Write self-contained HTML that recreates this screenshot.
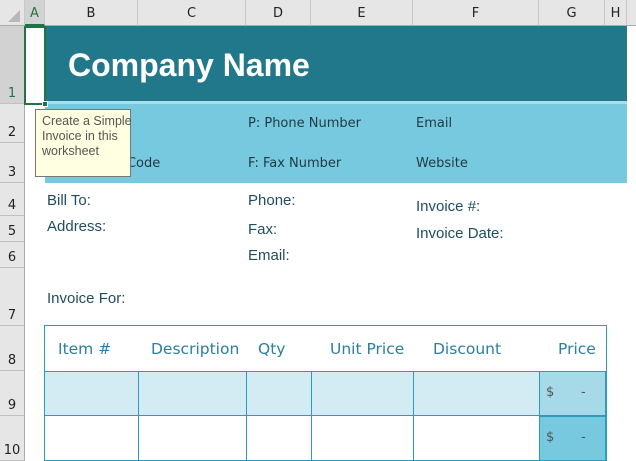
<!DOCTYPE html>
<html><head><style>
body{margin:0;width:636px;height:461px;overflow:hidden;background:#fff;position:relative;font-family:"Liberation Sans",Arial,sans-serif}
div{position:absolute;box-sizing:border-box}
.ch{top:0;height:26px;background:#E6E6E6;border-right:1px solid #C8C8C8;border-bottom:1px solid #ABABAB;font:13px "DejaVu Sans",sans-serif;color:#222;text-align:center;line-height:27px}
.rh{left:0;width:25px;background:#E6E6E6;border-bottom:1px solid #C0C0C0;border-right:1px solid #ABABAB;font:13px "DejaVu Sans",sans-serif;color:#222;text-align:center;line-height:14px;padding-top:0}
.rh span{position:absolute;bottom:2px;left:0;right:0}
.t{font-size:15px;color:#1F4E5F;white-space:nowrap}
.s{font:13px "DejaVu Sans",sans-serif;color:#1F3A44;white-space:nowrap}
.h{font:15.5px "DejaVu Sans",sans-serif;color:#2B7FA0;white-space:nowrap;top:340px}
</style></head><body>
<div class="ch" style="left:0;width:25px"><div style="left:8px;top:10px;width:0;height:0;border-left:12px solid transparent;border-bottom:12px solid #B8B8B8"></div></div>
<div class="ch" style="left:25px;width:20px;background:#D2D2D2;color:#217346;border-bottom:2px solid #217346">A</div>
<div class="ch" style="left:45px;width:93px">B</div>
<div class="ch" style="left:138px;width:108px">C</div>
<div class="ch" style="left:246px;width:65px">D</div>
<div class="ch" style="left:311px;width:102px">E</div>
<div class="ch" style="left:413px;width:126px">F</div>
<div class="ch" style="left:539px;width:66px">G</div>
<div class="ch" style="left:605px;width:22px">H</div>
<div class="ch" style="left:627px;width:9px;border-right:none"></div>

<div class="rh" style="top:26px;height:78px;background:#D2D2D2;color:#217346"><span>1</span></div>
<div class="rh" style="top:104px;height:39px"><span>2</span></div>
<div class="rh" style="top:143px;height:40px"><span>3</span></div>
<div class="rh" style="top:183px;height:33px"><span>4</span></div>
<div class="rh" style="top:216px;height:26px"><span>5</span></div>
<div class="rh" style="top:242px;height:26px"><span>6</span></div>
<div class="rh" style="top:268px;height:58px"><span>7</span></div>
<div class="rh" style="top:326px;height:45px"><span>8</span></div>
<div class="rh" style="top:371px;height:45px"><span>9</span></div>
<div class="rh" style="top:416px;height:45px"><span>10</span></div>

<div style="left:45px;top:26px;width:582px;height:75px;background:#21788A"></div>
<div style="left:45px;top:101px;width:582px;height:3px;background:#A8DCEA"></div>
<div style="left:45px;top:104px;width:582px;height:79px;background:#76C9DE"></div>
<div style="left:68px;top:47px;font-size:32px;font-weight:bold;color:#fff">Company Name</div>

<div style="left:24px;top:26px;width:22px;height:79px;border:2px solid #217346;background:#fff"></div>
<div style="left:42px;top:101px;width:6px;height:6px;background:#217346;border:1px solid #fff"></div>

<div class="s" style="left:48px;top:116px">Address</div>
<div class="s" style="left:48px;top:156px">City, ST Zip Code</div>
<div class="s" style="left:248px;top:116px">P: Phone Number</div>
<div class="s" style="left:248px;top:156px">F: Fax Number</div>
<div class="s" style="left:416px;top:116px">Email</div>
<div class="s" style="left:416px;top:156px">Website</div>

<div style="left:35px;top:109px;width:96px;height:68px;background:#FFFFE1;border:1px solid #767676;font:12.5px 'Liberation Sans',sans-serif;color:#555;line-height:15px;padding:4px 0 0 6px;white-space:nowrap">Create a Simple<br>Invoice in this<br>worksheet</div>

<div class="t" style="left:47px;top:192px">Bill To:</div>
<div class="t" style="left:47px;top:218px">Address:</div>
<div class="t" style="left:47px;top:290px">Invoice For:</div>
<div class="t" style="left:248px;top:192px">Phone:</div>
<div class="t" style="left:248px;top:221px">Fax:</div>
<div class="t" style="left:248px;top:247px">Email:</div>
<div class="t" style="left:416px;top:198px">Invoice #:</div>
<div class="t" style="left:416px;top:225px">Invoice Date:</div>

<div style="left:44px;top:325px;width:563px;height:136px;border:1px solid #2D9BBB"></div>
<div style="left:45px;top:371px;width:494px;height:45px;background:#D3ECF4;border-top:1px solid #2D9BBB;border-bottom:1px solid #2D9BBB"></div>
<div style="left:539px;top:371px;width:67px;height:45px;background:#A6DAE8;border:1px solid #2D9BBB"></div>
<div style="left:539px;top:416px;width:67px;height:45px;background:#76C9DE;border:1px solid #2D9BBB"></div>
<div style="left:138px;top:371px;width:1px;height:90px;background:#2D9BBB"></div>
<div style="left:246px;top:371px;width:1px;height:90px;background:#2D9BBB"></div>
<div style="left:311px;top:371px;width:1px;height:90px;background:#2D9BBB"></div>
<div style="left:413px;top:371px;width:1px;height:90px;background:#2D9BBB"></div>
<div class="h" style="left:58px">Item #</div>
<div class="h" style="left:151px">Description</div>
<div class="h" style="left:258px">Qty</div>
<div class="h" style="left:330px">Unit Price</div>
<div class="h" style="left:433px">Discount</div>
<div class="h" style="left:558px">Price</div>
<div class="s" style="left:546px;top:385px;color:#555">$</div>
<div class="s" style="left:581px;top:385px;color:#555">-</div>
<div class="s" style="left:546px;top:430px;color:#555">$</div>
<div class="s" style="left:581px;top:430px;color:#555">-</div>
</body></html>
